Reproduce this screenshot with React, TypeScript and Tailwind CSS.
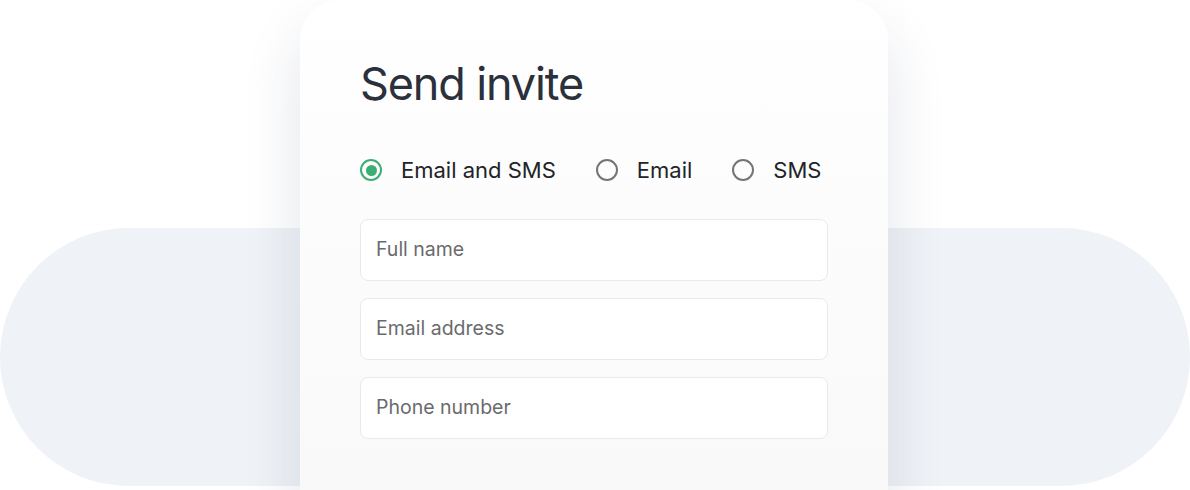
const font = { fontFamily: "Inter, 'Noto Sans', sans-serif" };

function Radio({ label, checked }: { label: string; checked?: boolean }) {
	return (
		<label className="flex items-center gap-[19px]">
			{checked ? (
				<span className="w-[22px] h-[22px] rounded-full border-2 border-[#3dae72] flex items-center justify-center">
					<span className="w-[11px] h-[11px] rounded-full bg-[#3dae72]" />
				</span>
			) : (
				<span className="w-[22px] h-[22px] rounded-full border-2 border-[#757575]" />
			)}
			<span className="text-[22px] leading-none text-[#222326]">{label}</span>
		</label>
	);
}

function Field({ placeholder }: { placeholder: string }) {
	return (
		<div className="h-[62px] rounded-lg border border-[#e7e9f4] bg-white flex items-center px-[15px]">
			<span className="text-[19.5px] text-[#6a6a6d]">{placeholder}</span>
		</div>
	);
}

export default function App() {
	return (
		<div className="grid w-[1190px] h-[490px] overflow-hidden bg-white" style={font}>
			{/* pill behind the card */}
			<div className="col-start-1 row-start-1 self-start mt-[228px] h-[258px] w-[1190px] rounded-full bg-[#eff2f6]" />

			{/* invite card */}
			<div className="col-start-1 row-start-1 self-start relative z-10 ml-[300px] w-[588px] h-[540px] rounded-t-[40px] bg-gradient-to-b from-white to-[#f8f8f9] shadow-[0_30px_60px_rgba(25,45,90,0.12)] px-[60px] pt-[61px]">
				<h1 className="text-[45px] leading-none tracking-tight text-[#2b303b]">Send invite</h1>

				<div className="flex items-center gap-[40px] mt-[53px]">
					<Radio label="Email and SMS" checked />
					<Radio label="Email" />
					<Radio label="SMS" />
				</div>

				<div className="flex flex-col gap-[17px] mt-[38px]">
					<Field placeholder="Full name" />
					<Field placeholder="Email address" />
					<Field placeholder="Phone number" />
				</div>
			</div>
		</div>
	);
}
